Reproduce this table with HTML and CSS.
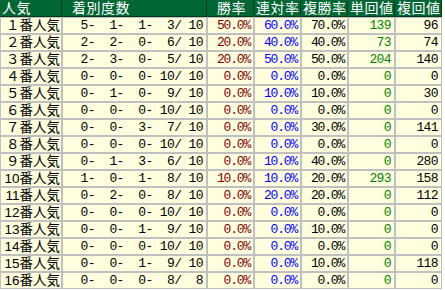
FILE: index.html
```html
<!DOCTYPE html>
<html lang="ja">
<head>
<meta charset="utf-8">
<link rel="stylesheet" href="styles.css">
</head>
<body>
<table class="stats">
<colgroup>
<col class="c-label"><col class="c-rec"><col class="c-pct"><col class="c-pct"><col class="c-pct"><col class="c-pct"><col class="c-pct">
</colgroup>
<thead>
<tr><th>人気</th><th class="ind">着別度数</th><th class="ind">勝率</th><th>連対率</th><th>複勝率</th><th>単回値</th><th>複回値</th></tr>
</thead>
<tbody>
<tr><td class="lbl">１番人気</td><td class="rec">5-  1-  1-  3/ 10</td><td class="pct win">50.0%</td><td class="pct ren">60.0%</td><td class="pct">70.0%</td><td class="tan">139</td><td>96</td></tr>
<tr><td class="lbl">２番人気</td><td class="rec">2-  2-  0-  6/ 10</td><td class="pct win">20.0%</td><td class="pct ren">40.0%</td><td class="pct">40.0%</td><td class="tan">73</td><td>74</td></tr>
<tr><td class="lbl">３番人気</td><td class="rec">2-  3-  0-  5/ 10</td><td class="pct win">20.0%</td><td class="pct ren">50.0%</td><td class="pct">50.0%</td><td class="tan">204</td><td>140</td></tr>
<tr><td class="lbl">４番人気</td><td class="rec">0-  0-  0- 10/ 10</td><td class="pct win">0.0%</td><td class="pct ren">0.0%</td><td class="pct">0.0%</td><td class="tan">0</td><td>0</td></tr>
<tr><td class="lbl">５番人気</td><td class="rec">0-  1-  0-  9/ 10</td><td class="pct win">0.0%</td><td class="pct ren">10.0%</td><td class="pct">10.0%</td><td class="tan">0</td><td>30</td></tr>
<tr><td class="lbl">６番人気</td><td class="rec">0-  0-  0- 10/ 10</td><td class="pct win">0.0%</td><td class="pct ren">0.0%</td><td class="pct">0.0%</td><td class="tan">0</td><td>0</td></tr>
<tr><td class="lbl">７番人気</td><td class="rec">0-  0-  3-  7/ 10</td><td class="pct win">0.0%</td><td class="pct ren">0.0%</td><td class="pct">30.0%</td><td class="tan">0</td><td>141</td></tr>
<tr><td class="lbl">８番人気</td><td class="rec">0-  0-  0- 10/ 10</td><td class="pct win">0.0%</td><td class="pct ren">0.0%</td><td class="pct">0.0%</td><td class="tan">0</td><td>0</td></tr>
<tr><td class="lbl">９番人気</td><td class="rec">0-  1-  3-  6/ 10</td><td class="pct win">0.0%</td><td class="pct ren">10.0%</td><td class="pct">40.0%</td><td class="tan">0</td><td>280</td></tr>
<tr><td class="lbl">10番人気</td><td class="rec">1-  0-  1-  8/ 10</td><td class="pct win">10.0%</td><td class="pct ren">10.0%</td><td class="pct">20.0%</td><td class="tan">293</td><td>158</td></tr>
<tr><td class="lbl">11番人気</td><td class="rec">0-  2-  0-  8/ 10</td><td class="pct win">0.0%</td><td class="pct ren">20.0%</td><td class="pct">20.0%</td><td class="tan">0</td><td>112</td></tr>
<tr><td class="lbl">12番人気</td><td class="rec">0-  0-  0- 10/ 10</td><td class="pct win">0.0%</td><td class="pct ren">0.0%</td><td class="pct">0.0%</td><td class="tan">0</td><td>0</td></tr>
<tr><td class="lbl">13番人気</td><td class="rec">0-  0-  1-  9/ 10</td><td class="pct win">0.0%</td><td class="pct ren">0.0%</td><td class="pct">10.0%</td><td class="tan">0</td><td>0</td></tr>
<tr><td class="lbl">14番人気</td><td class="rec">0-  0-  0- 10/ 10</td><td class="pct win">0.0%</td><td class="pct ren">0.0%</td><td class="pct">0.0%</td><td class="tan">0</td><td>0</td></tr>
<tr><td class="lbl">15番人気</td><td class="rec">0-  0-  1-  9/ 10</td><td class="pct win">0.0%</td><td class="pct ren">0.0%</td><td class="pct">10.0%</td><td class="tan">0</td><td>118</td></tr>
<tr><td class="lbl">16番人気</td><td class="rec">0-  0-  0-  8/  8</td><td class="pct win">0.0%</td><td class="pct ren">0.0%</td><td class="pct">0.0%</td><td class="tan">0</td><td>0</td></tr>
</tbody>
</table>
</body>
</html>
```

FILE: styles.css
```css
html, body {
  margin: 0;
  padding: 0;
  background: #ffffff;
}

.stats {
  width: 442px;
  table-layout: fixed;
  border-collapse: separate;
  border-spacing: 0;
  font-family: "Liberation Sans", "Noto Sans CJK JP", sans-serif;
}

.c-label { width: 62px; }
.c-rec { width: 145px; }
.c-pct { width: 47px; }

.stats th {
  background: #006633;
  color: #ffffff;
  font-weight: normal;
  font-size: 14px;
  line-height: 15px;
  height: 15px;
  padding: 0 0 0 1px;
  text-align: left;
  border: 1px solid #003a1c;
  border-top-color: #006633;
  border-left-color: #006633;
  white-space: nowrap;
  letter-spacing: 0.5px;
}

.stats th.ind {
  padding-left: 9px;
}

.stats td {
  background: #ffffe0;
  border: 1px solid #c0c0c0;
  padding: 0 3px 0 0;
  line-height: 15px;
  text-align: right;
  white-space: pre;
  font-family: "Liberation Mono", monospace;
  font-size: 13px;
  letter-spacing: -0.6px;
  color: #000000;
}

.stats td.lbl {
  font-family: "Liberation Sans", "Noto Sans CJK JP", sans-serif;
  font-size: 13.5px;
  letter-spacing: 0;
  padding-right: 1px;
}

.stats td.pct {
  letter-spacing: -1.2px;
}

.stats td.win { color: #800000; }
.stats td.ren { color: #0000ff; }
.stats td.tan { color: #008000; }
```
